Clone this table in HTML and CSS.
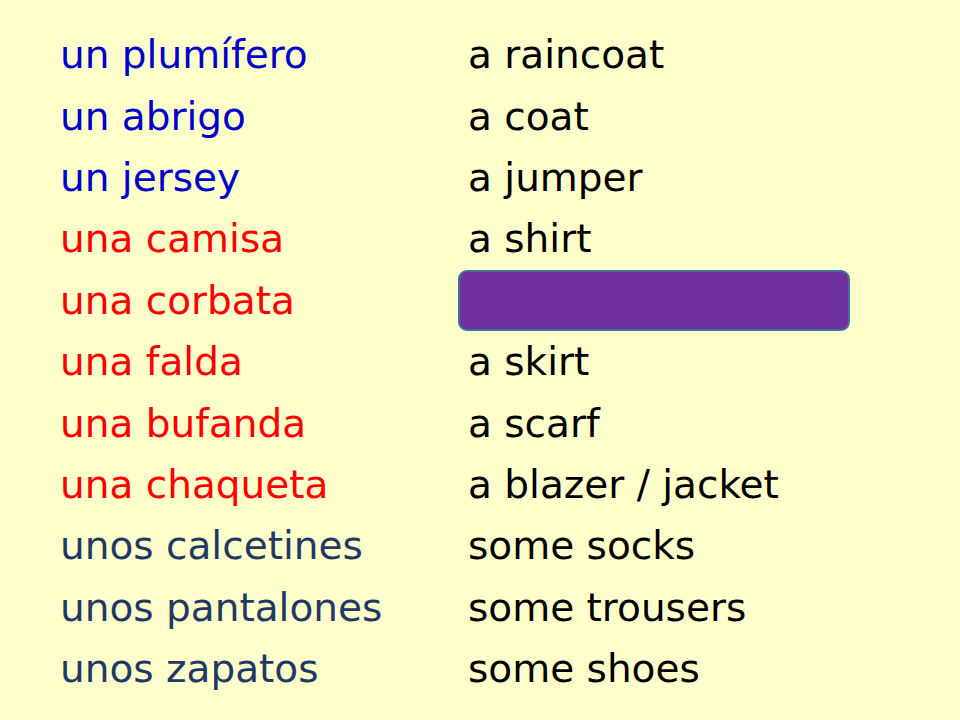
FILE: index.html
```html
<!DOCTYPE html>
<html lang="es">
<head>
<meta charset="utf-8">
<title>Vocabulario: la ropa</title>
<link rel="stylesheet" href="styles.css">
</head>
<body>
<main class="slide">
  <div class="vocab">
    <div class="es blue">un plumífero</div><div class="en">a raincoat</div>
    <div class="es blue">un abrigo</div><div class="en">a coat</div>
    <div class="es blue">un jersey</div><div class="en">a jumper</div>
    <div class="es red">una camisa</div><div class="en">a shirt</div>
    <div class="es red">una corbata</div><div class="en"><span class="cover"></span></div>
    <div class="es red">una falda</div><div class="en">a skirt</div>
    <div class="es red">una bufanda</div><div class="en">a scarf</div>
    <div class="es red">una chaqueta</div><div class="en">a blazer / jacket</div>
    <div class="es navy">unos calcetines</div><div class="en">some socks</div>
    <div class="es navy">unos pantalones</div><div class="en">some trousers</div>
    <div class="es navy">unos zapatos</div><div class="en">some shoes</div>
  </div>
</main>
</body>
</html>
```
FILE: styles.css
```css
html, body {
  margin: 0;
  padding: 0;
}
body {
  background: #ffffcc;
  width: 960px;
  height: 720px;
  overflow: hidden;
}
.slide {
  padding: 24px 0 0 60px;
}
.vocab {
  display: grid;
  grid-template-columns: 408px 1fr;
  grid-auto-rows: 61.4px;
  align-items: center;
  font-family: "DejaVu Sans", "Noto Sans", sans-serif;
  font-size: 39px;
  color: #000;
}
.es, .en {
  white-space: nowrap;
}
.blue { color: #0000cc; }
.red { color: #ff0000; }
.navy { color: #1f3864; }
.en {
  height: 100%;
  display: flex;
  align-items: center;
}
.cover {
  display: block;
  margin-left: -10px;
  width: 392px;
  height: 61px;
  box-sizing: border-box;
  background: #7030a0;
  border: 2px solid #41719c;
  border-radius: 9px;
}
```
